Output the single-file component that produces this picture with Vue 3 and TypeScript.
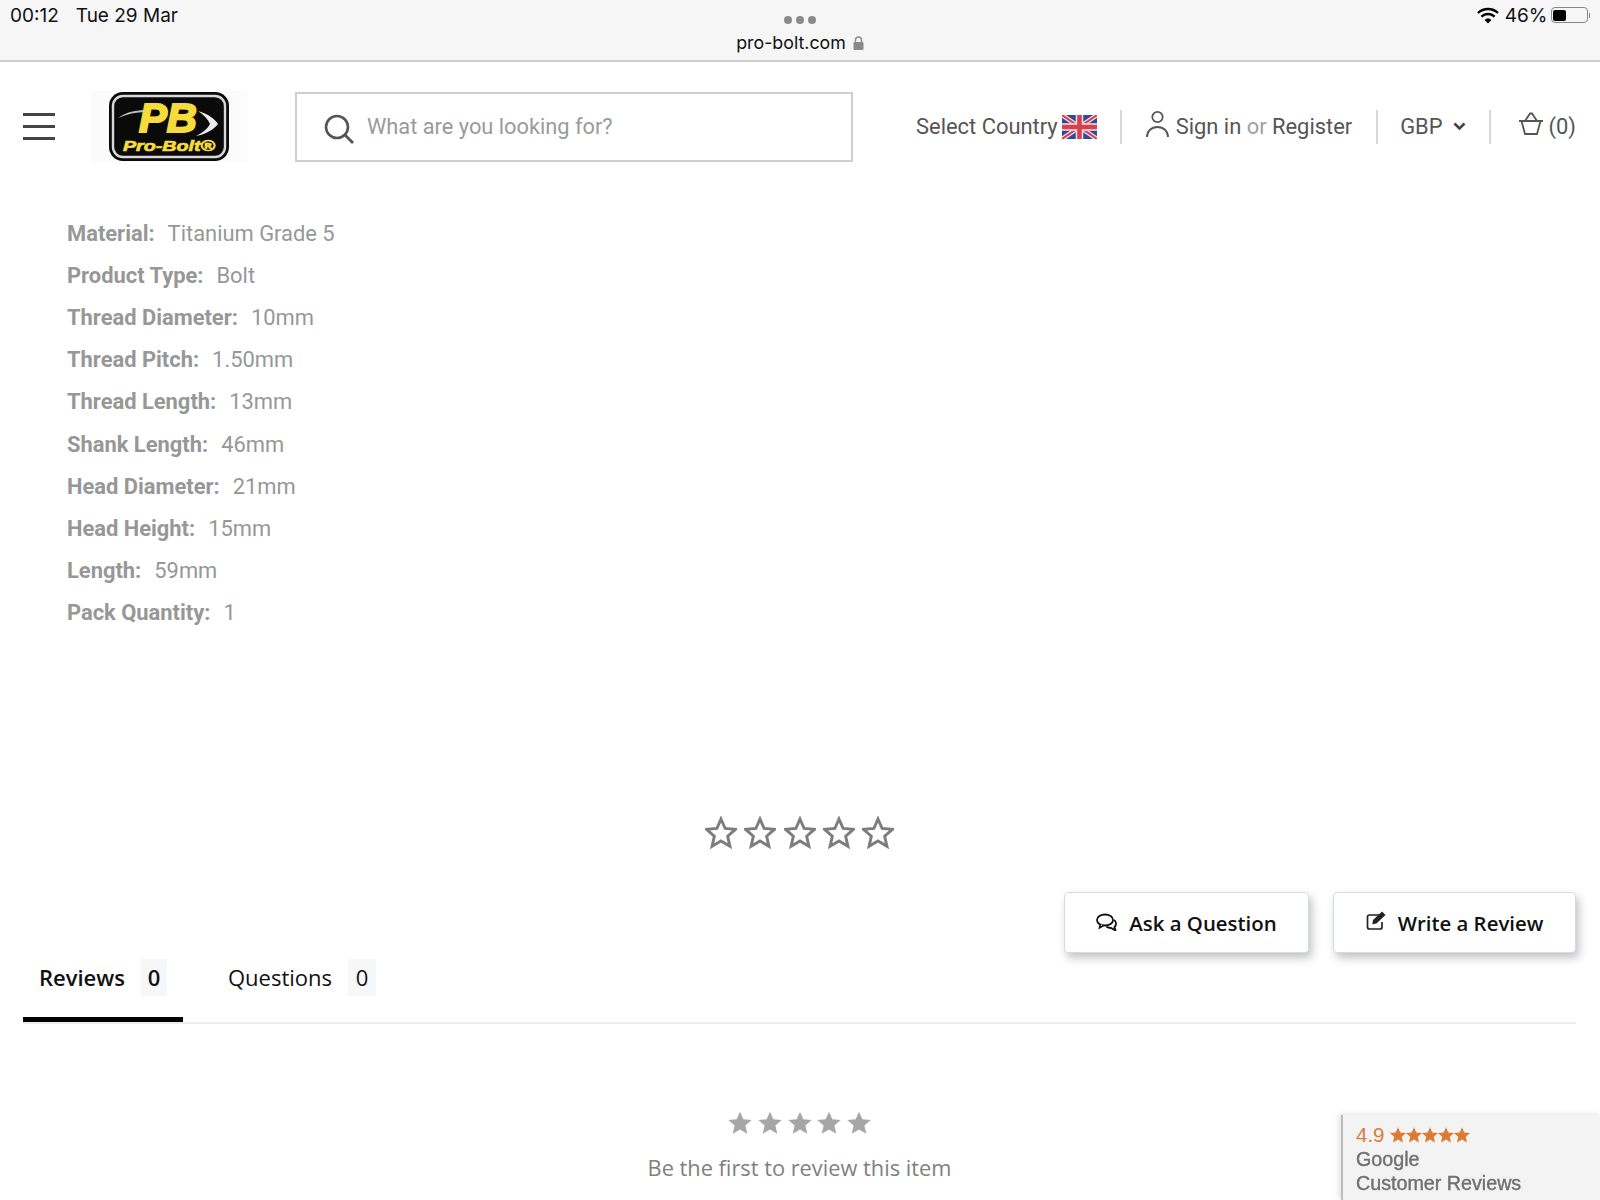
<script setup lang="ts">
const specs = [
  { label: 'Material:', value: 'Titanium Grade 5' },
  { label: 'Product Type:', value: 'Bolt' },
  { label: 'Thread Diameter:', value: '10mm' },
  { label: 'Thread Pitch:', value: '1.50mm' },
  { label: 'Thread Length:', value: '13mm' },
  { label: 'Shank Length:', value: '46mm' },
  { label: 'Head Diameter:', value: '21mm' },
  { label: 'Head Height:', value: '15mm' },
  { label: 'Length:', value: '59mm' },
  { label: 'Pack Quantity:', value: '1' },
]

const starPath = 'M12 1.5l3.1 7.1 7.7.7-5.8 5.1 1.7 7.6-6.7-4-6.7 4 1.7-7.6-5.8-5.1 7.7-.7z'
</script>

<template>
  <div class="page">
    <div class="browser-bar">
      <div class="status-row">
        <div class="clock"><span>00:12</span><span>Tue 29 Mar</span></div>
        <div class="dots"><i></i><i></i><i></i></div>
        <div class="status-right">
          <svg class="wifi" width="22" height="17" viewBox="0 0 22 17">
            <path d="M1 6a14.5 14.5 0 0 1 20 0" fill="none" stroke="#000" stroke-width="2.4" />
            <path d="M4.4 9.6a9.6 9.6 0 0 1 13.2 0" fill="none" stroke="#000" stroke-width="2.4" />
            <path d="M11 16.5l-3.4-3.6a5 5 0 0 1 6.8 0z" fill="#000" />
          </svg>
          <span class="pct">46%</span>
          <span class="battery"><b></b></span>
          <span class="nub"></span>
        </div>
      </div>
      <div class="url">
        <span>pro-bolt.com</span>
        <svg width="11" height="14" viewBox="0 0 11 14">
          <path d="M2.5 6V4a3 3 0 0 1 6 0v2" fill="none" stroke="#8a8a8a" stroke-width="1.4" />
          <rect x="0.5" y="6" width="10" height="8" rx="1.2" fill="#8a8a8a" />
        </svg>
      </div>
    </div>

    <header class="site-header">
      <div class="header-left">
        <div class="burger"><i></i><i></i><i></i></div>
        <div class="logo">
          <svg width="122" height="71" viewBox="0 0 122 71">
            <rect x="1" y="1" width="120" height="69" rx="14" fill="#0a0a0a" />
            <rect x="5" y="5" width="112" height="61" rx="10" fill="none" stroke="#d8d8d8" stroke-width="2.4" />
            <path d="M10 27c8-6 18-8 29-8l-1 2c-10 0-19 2-28 6z" fill="#bdbdbd" />
            <path d="M90 20c10 3 17 8 20 13-5 6-12 10-22 12 8-4 12-8 14-12-2-5-6-9-12-13z" fill="#ececec" />
            <text x="60" y="41" class="logo-pb" text-anchor="middle" textLength="58" lengthAdjust="spacingAndGlyphs">PB</text>
            <text x="61" y="60" class="logo-name" text-anchor="middle" textLength="92" lengthAdjust="spacingAndGlyphs">Pro-Bolt®</text>
          </svg>
        </div>
        <div class="search">
          <svg width="32" height="32" viewBox="0 0 32 32">
            <circle cx="14" cy="14" r="11" fill="none" stroke="#555" stroke-width="2.6" />
            <path d="M22 22l8 8" stroke="#555" stroke-width="2.8" />
          </svg>
          <span>What are you looking for?</span>
        </div>
      </div>

      <nav class="header-nav">
        <div class="nav-item country">
          <span>Select Country</span>
          <svg width="35" height="24" viewBox="0 0 35 24">
            <rect width="35" height="24" fill="#33479c" />
            <path d="M0 0l35 24M35 0L0 24" stroke="#f0dfe4" stroke-width="4.5" />
            <path d="M0 0l35 24M35 0L0 24" stroke="#d8404e" stroke-width="2" />
            <path d="M17.5 0v24M0 12h35" stroke="#f2e4e6" stroke-width="7.5" />
            <path d="M17.5 0v24M0 12h35" stroke="#d8404e" stroke-width="4.6" />
          </svg>
        </div>
        <div class="nav-item account">
          <svg width="25" height="29" viewBox="0 0 25 29">
            <circle cx="12.5" cy="7" r="5.2" fill="none" stroke="#555" stroke-width="1.8" />
            <path d="M2 27c0-6 4.5-10 10.5-10S23 21 23 27" fill="none" stroke="#555" stroke-width="1.8" />
          </svg>
          <span>Sign in <em>or</em> Register</span>
        </div>
        <div class="nav-item currency">
          <span>GBP</span>
          <svg width="13" height="9" viewBox="0 0 13 9">
            <path d="M1.5 1.5l5 5 5-5" fill="none" stroke="#444" stroke-width="2.6" />
          </svg>
        </div>
        <div class="nav-item cart">
          <svg width="26" height="24" viewBox="0 0 26 24">
            <path d="M1 9h24M3.5 9l3.5 13h12l3.5-13M7 9l5-7.5h2L19 9" fill="none" stroke="#555" stroke-width="1.8" />
          </svg>
          <span>(0)</span>
        </div>
      </nav>
    </header>

    <main class="content">
      <ul class="specs">
        <li v-for="spec in specs" :key="spec.label">
          <strong>{{ spec.label }}</strong>
          <span>{{ spec.value }}</span>
        </li>
      </ul>

      <div class="rating-outline">
        <svg v-for="n in 5" :key="n" width="32" height="34" viewBox="0 0 24 24">
          <path :d="starPath" fill="none" stroke="#7d7d7d" stroke-width="2.2" />
        </svg>
      </div>

      <div class="actions">
        <button type="button" class="action-btn">
          <svg width="22" height="18" viewBox="0 0 22 18">
            <ellipse cx="9" cy="7" rx="8" ry="5.5" fill="none" stroke="#111" stroke-width="1.8" />
            <path d="M4.5 11l-1 4 4-2.5" fill="#fff" stroke="#111" stroke-width="1.5" />
            <path d="M18 7c2.5 2 2.8 5 .5 7l1 3.5-4.5-2.5c-2 0-3.5-.5-4.5-1.5" fill="none" stroke="#111" stroke-width="1.8" />
          </svg>
          <span>Ask a Question</span>
        </button>
        <button type="button" class="action-btn">
          <svg class="edit-icon" width="21" height="19" viewBox="0 0 21 19">
            <path d="M14 4H3.5A2 2 0 0 0 1.5 6v10a2 2 0 0 0 2 2H14a2 2 0 0 0 2-2v-5" fill="none" stroke="#222" stroke-width="1.7" />
            <path d="M7 9l9-8.5 3.5 3.5-9 8.5-4.2.8z" fill="#222" />
          </svg>
          <span>Write a Review</span>
        </button>
      </div>

      <div class="tabs">
        <div class="tab active">
          <span>Reviews</span>
          <b>0</b>
        </div>
        <div class="tab">
          <span>Questions</span>
          <b>0</b>
        </div>
      </div>

      <div class="empty-reviews">
        <div class="solid-stars">
          <svg v-for="n in 5" :key="n" width="26" height="26" viewBox="0 0 24 24">
            <path :d="starPath" fill="#a6a6a6" />
          </svg>
        </div>
        <p>Be the first to review this item</p>
      </div>
    </main>

    <aside class="badge">
      <div class="badge-score">
        <span>4.9</span>
        <svg v-for="n in 5" :key="n" width="18" height="18" viewBox="0 0 24 24">
          <path :d="starPath" fill="#dd7a36" />
        </svg>
      </div>
      <div class="badge-name">Google</div>
      <div class="badge-name">Customer Reviews</div>
    </aside>
  </div>
</template>

<style>
html,
body {
  margin: 0;
  background: #fff;
}
</style>

<style scoped>
.page {
  position: relative;
  width: 1600px;
  height: 1200px;
  overflow: hidden;
  background: #fff;
  font-family: Roboto, 'Liberation Sans', sans-serif;
}

.browser-bar {
  height: 62px;
  box-sizing: border-box;
  background: #f6f6f6;
  border-bottom: 2px solid #cdcdcd;
  padding: 0 10px;
  font-family: Inter, 'Liberation Sans', sans-serif;
  color: #111;
}

.status-row {
  display: grid;
  grid-template-columns: 1fr auto 1fr;
  align-items: center;
  height: 32px;
}

.clock {
  display: flex;
  gap: 17px;
  font-size: 19px;
  margin-top: -2px;
}

.dots {
  display: flex;
  gap: 4px;
  margin-top: 7px;
}

.dots i {
  width: 8px;
  height: 8px;
  border-radius: 50%;
  background: #8a8a8a;
}

.status-right {
  display: flex;
  align-items: center;
  justify-content: flex-end;
  gap: 6px;
  margin-top: -2px;
}

.pct {
  font-size: 19px;
}

.battery {
  display: block;
  width: 37px;
  height: 16px;
  box-sizing: border-box;
  border: 1px solid #888;
  border-radius: 4px;
  padding: 1.5px;
  margin-left: -3px;
  margin-right: -5px;
}

.battery b {
  display: block;
  width: 13px;
  height: 100%;
  background: #000;
  border-radius: 2px;
}

.nub {
  width: 1.5px;
  height: 5px;
  background: #888;
}

.url {
  display: flex;
  justify-content: center;
  align-items: center;
  gap: 7px;
  font-size: 17.8px;
}

.site-header {
  display: flex;
  justify-content: space-between;
  align-items: center;
  height: 129px;
  padding: 0 24px 0 23px;
}

.header-left {
  display: flex;
  align-items: center;
}

.burger {
  display: flex;
  flex-direction: column;
  gap: 8.7px;
  width: 32px;
}

.burger i {
  height: 3px;
  background: #444;
}

.logo {
  display: flex;
  margin-left: 36px;
  padding: 0 17px;
  background: #fbfbfb;
}

.search {
  display: flex;
  align-items: center;
  gap: 12px;
  width: 558px;
  height: 70px;
  box-sizing: border-box;
  margin-left: 48px;
  padding: 5px 0 0 26px;
  border: 2px solid #cfcfcf;
  font-size: 21.8px;
  color: #9a9a9a;
}

.search span {
  margin-top: -5px;
}

.header-nav {
  display: flex;
  align-items: center;
  font-size: 21.9px;
  color: #555;
}

.nav-item {
  display: flex;
  align-items: center;
  height: 34px;
}

.nav-item + .nav-item {
  border-left: 2px solid #d8d8d8;
}

.country {
  gap: 4px;
  padding-right: 23px;
}

.account {
  gap: 6px;
  padding: 0 24px 0 23px;
}

.account svg {
  margin-top: -5px;
}

.account em {
  font-style: normal;
  color: #a0a0a0;
}

.currency {
  gap: 10px;
  padding: 0 23px 0 22px;
}

.cart {
  gap: 5px;
  padding-left: 27px;
}

.cart svg {
  margin-top: -5px;
}

.logo-pb {
  font: italic 700 40px 'Liberation Sans', sans-serif;
  fill: #f5dc3c;
  stroke: #f5dc3c;
  stroke-width: 2;
}

.logo-name {
  font: italic 700 15px 'Liberation Sans', sans-serif;
  fill: #f5dc3c;
  stroke: #f5dc3c;
  stroke-width: 0.7;
}

.content {
  padding: 0 24px 0 23px;
}

.specs {
  list-style: none;
  margin: 0;
  padding: 21px 0 0 44px;
  font-size: 21.9px;
  color: #979797;
}

.specs li {
  display: flex;
  gap: 13px;
  height: 42.2px;
  align-items: center;
}

.specs strong {
  font-weight: 700;
}

.rating-outline {
  display: flex;
  justify-content: center;
  gap: 7.3px;
  margin-top: 182px;
}

.actions {
  display: flex;
  justify-content: flex-end;
  gap: 24px;
  margin-top: 42px;
}

.action-btn {
  display: flex;
  align-items: center;
  justify-content: center;
  gap: 11px;
  width: 245px;
  height: 61px;
  background: #fff;
  border: 1px solid #d3dbe8;
  border-radius: 4px;
  box-shadow: 3px 5px 9px rgba(70, 70, 70, 0.32);
  font: 600 20.4px 'Open Sans', sans-serif;
  color: #111;
}

.action-btn span {
  padding-top: 2px;
}

.action-btn:last-child {
  width: 243px;
}

.edit-icon {
  margin-top: -4px;
}

.tabs {
  display: flex;
  gap: 29px;
  height: 71px;
  margin-top: -2px;
  border-bottom: 2px solid #ededed;
  font: 400 22px 'Open Sans', sans-serif;
  color: #111;
}

.tab {
  display: flex;
  align-items: flex-start;
  gap: 16px;
  padding: 8px 16px 0;
  height: 71px;
  box-sizing: border-box;
  line-height: 37px;
}

.tab b {
  display: block;
  width: 28px;
  text-align: center;
  background: #f6f7f9;
  font-weight: 400;
}

.tab.active {
  width: 160px;
  font-weight: 600;
  border-bottom: 5px solid #000;
}

.tab.active b {
  font-weight: 600;
}

.empty-reviews {
  display: flex;
  flex-direction: column;
  align-items: center;
  margin-top: 86px;
  color: #808080;
  font: 400 21.8px 'Open Sans', sans-serif;
}

.solid-stars {
  display: flex;
  gap: 3.6px;
}

.empty-reviews p {
  margin: 17px 0 0;
}

.badge {
  position: absolute;
  right: 0;
  bottom: 0;
  width: 259px;
  height: 85px;
  box-sizing: border-box;
  padding: 8px 0 0 13px;
  background: #f3f3f3;
  border-left: 2px solid #bdbdbd;
  box-shadow: -2px -1px 5px rgba(0, 0, 0, 0.12);
  font-family: 'Liberation Sans', sans-serif;
}

.badge-score {
  display: flex;
  align-items: center;
  font-size: 20.5px;
  color: #dd7a36;
  height: 24px;
}

.badge-score span {
  margin-right: 4px;
}

.badge-score svg {
  margin-right: -2px;
}

.badge-name {
  font-size: 19.7px;
  line-height: 24px;
  color: #707070;
  -webkit-text-stroke: 0.4px #707070;
  filter: blur(0.7px);
}
</style>
